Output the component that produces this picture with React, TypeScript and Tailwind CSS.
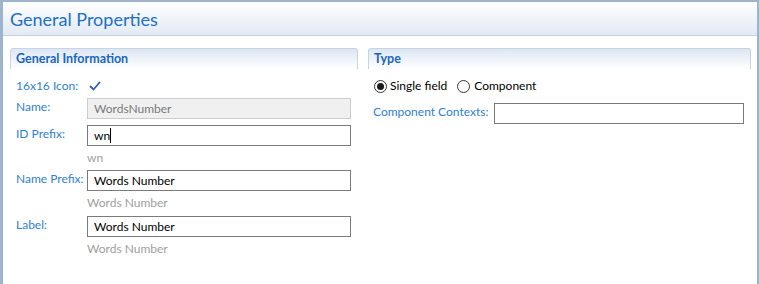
import React from "react";

function Radio({ checked }: { checked?: boolean }) {
  return (
    <span className="inline-flex items-center justify-center w-[13px] h-[13px] rounded-full border border-[#333333] bg-white">
      {checked && <span className="w-[7px] h-[7px] rounded-full bg-[#1a1a1a]" />}
    </span>
  );
}

function SectionHeader({ title }: { title: string }) {
  return (
    <div className="h-[21px] rounded-t-[3px] border border-b-0 border-[#c6d5e6] bg-gradient-to-b from-[#dde7f2] to-white flex items-center pl-[5px]">
      <span className="text-[12.5px] font-bold text-[#1766c0] leading-none whitespace-nowrap">{title}</span>
    </div>
  );
}

function Field({ label, value, hint, disabled, caret }: { label: string; value: string; hint?: string; disabled?: boolean; caret?: boolean }) {
  return (
    <div className="flex flex-col">
      <div className="flex">
        <div className="w-[71px] text-[#2f7fd4] leading-[16px] pt-[1px] whitespace-nowrap">{label}</div>
        <div
          className={
            disabled
              ? "w-[264px] h-[21px] border border-[#cccccc] bg-[#f0f0f0] text-[#7a7a7a] pl-[6px] flex items-center whitespace-nowrap"
              : "w-[264px] h-[21px] border border-[#7a7a7a] bg-white text-black pl-[6px] flex items-center whitespace-nowrap"
          }
        >
          {value}
          {caret && <span className="inline-block w-[1px] h-[15px] bg-black" />}
        </div>
      </div>
      {hint !== undefined && (
        <div className="pl-[71px] mt-[4px] h-[16px] leading-[16px] text-[#a0a0a0] whitespace-nowrap">{hint}</div>
      )}
    </div>
  );
}

export default function App() {
  return (
    <div
      className="w-[759px] h-[284px] bg-white border-l-[3px] border-t-2 border-r-2 border-[#9db4ce] flex flex-col text-[12px]"
      style={{ fontFamily: 'Lato, "Open Sans", sans-serif' }}
    >
      <div className="h-[34px] shrink-0 bg-gradient-to-b from-white to-[#e2eaf4] border-b border-[#c2d3e5] flex items-center pl-[7px]">
        <span className="text-[18px] text-[#1b6fc6] leading-none">General Properties</span>
      </div>
      <div className="flex gap-[10px] pl-[7px] pt-[12px]">
        <div className="w-[348px] flex flex-col">
          <SectionHeader title="General Information" />
          <div className="pl-[6px] flex flex-col">
            <div className="flex items-center h-[16px] mt-[9px]">
              <div className="w-[71px] text-[#2f7fd4] leading-[16px] whitespace-nowrap">16x16 Icon:</div>
              <svg width="12" height="10" viewBox="0 0 12 10" className="ml-[2px]">
                <polyline points="1,5 4.5,8.5 11,1" fill="none" stroke="#2b62b5" strokeWidth="1.8" />
              </svg>
            </div>
            <div className="mt-[4px]">
              <Field label="Name:" value="WordsNumber" disabled />
            </div>
            <div className="mt-[6px]">
              <Field label="ID Prefix:" value="wn" caret hint="wn" />
            </div>
            <div className="mt-[4px]">
              <Field label="Name Prefix:" value="Words Number" hint="Words Number" />
            </div>
            <div className="mt-[5px]">
              <Field label="Label:" value="Words Number" hint="Words Number" />
            </div>
          </div>
        </div>
        <div className="w-[383px] flex flex-col">
          <SectionHeader title="Type" />
          <div className="pl-[5px] flex flex-col">
            <div className="flex items-center h-[16px] mt-[9px] pl-[1px] text-black whitespace-nowrap">
              <Radio checked />
              <span className="ml-[3px]">Single field</span>
              <span className="ml-[10px] flex items-center">
                <Radio />
              </span>
              <span className="ml-[4px]">Component</span>
            </div>
            <div className="flex mt-[9px]">
              <div className="w-[121px] text-[#2f7fd4] leading-[16px] pt-[1px] whitespace-nowrap">Component Contexts:</div>
              <div className="w-[250px] h-[21px] border border-[#7a7a7a] bg-white" />
            </div>
          </div>
        </div>
      </div>
    </div>
  );
}
